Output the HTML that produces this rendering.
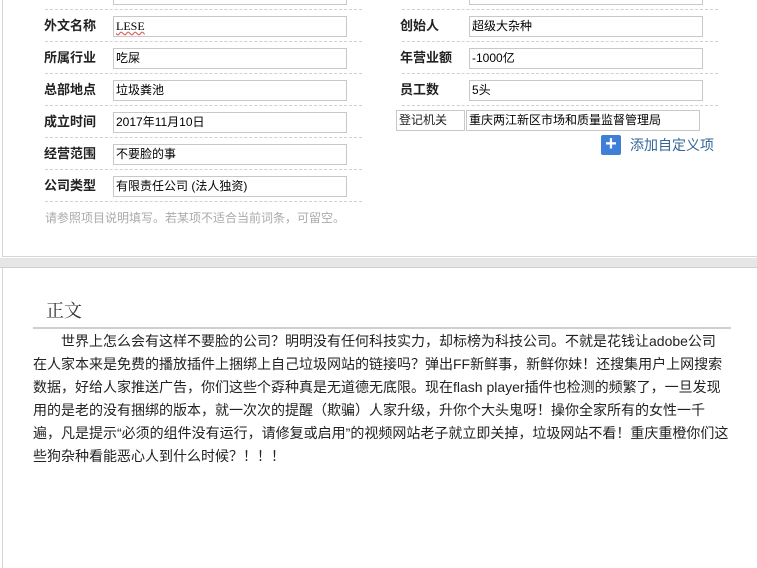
<!DOCTYPE html>
<html><head><meta charset="utf-8"><style>
*{margin:0;padding:0;box-sizing:border-box}
body{width:757px;height:563px;overflow:hidden;background:#fff;font-family:"Liberation Sans","Noto Sans CJK SC",sans-serif;position:relative;color:#333}
.abs{position:absolute}
.p1{left:2px;top:-2px;width:770px;height:259px;border:1px solid #d6d6d6;background:#fff}
.band{left:0;top:258px;width:757px;height:10px;background:#e6e6e6;border-bottom:1px solid #d0d0d0}
.p2{left:2px;top:268px;width:770px;height:300px;border-left:1px solid #d6d6d6;background:#fff}
.dash{height:0;border-top:1px dashed #d0d0d0}
.lbl{font-size:13px;font-weight:bold;color:#222;line-height:20px}
.inp{height:21px;border:1px solid #c8c8c8;font-size:12px;line-height:19px;padding-left:2px;color:#000;background:#fff}
.hint{font-size:12px;color:#aaa}
.body{left:33px;top:330px;width:686px;font-size:14px;line-height:23px;color:#222}
.body div{white-space:nowrap}
</style></head><body>
<div class="abs p1"></div>
<div class="abs band"></div>
<div class="abs p2"></div>

<div class="abs inp" style="left:113px;top:-16px;width:234px"></div>
<div class="abs inp" style="left:469px;top:-16px;width:234px"></div>

<div class="abs dash" style="left:45px;top:9px;width:317px"></div>
<div class="abs dash" style="left:45px;top:41px;width:317px"></div>
<div class="abs dash" style="left:45px;top:73px;width:317px"></div>
<div class="abs dash" style="left:45px;top:105px;width:317px"></div>
<div class="abs dash" style="left:45px;top:137px;width:317px"></div>
<div class="abs dash" style="left:45px;top:169px;width:317px"></div>
<div class="abs dash" style="left:45px;top:201px;width:317px"></div>

<div class="abs lbl" style="left:44px;top:16px">外文名称</div>
<div class="abs inp" style="left:113px;top:16px;width:234px;font-family:'Liberation Serif',serif;text-decoration:underline wavy #d66">LESE</div>
<div class="abs lbl" style="left:44px;top:48px">所属行业</div>
<div class="abs inp" style="left:113px;top:48px;width:234px">吃屎</div>
<div class="abs lbl" style="left:44px;top:80px">总部地点</div>
<div class="abs inp" style="left:113px;top:80px;width:234px">垃圾粪池</div>
<div class="abs lbl" style="left:44px;top:112px">成立时间</div>
<div class="abs inp" style="left:113px;top:112px;width:234px">2017年11月10日</div>
<div class="abs lbl" style="left:44px;top:144px">经营范围</div>
<div class="abs inp" style="left:113px;top:144px;width:234px">不要脸的事</div>
<div class="abs lbl" style="left:44px;top:176px">公司类型</div>
<div class="abs inp" style="left:113px;top:176px;width:234px">有限责任公司 (法人独资)</div>
<div class="abs hint" style="left:45px;top:209px">请参照项目说明填写。若某项不适合当前词条，可留空。</div>

<div class="abs dash" style="left:402px;top:9px;width:316px"></div>
<div class="abs dash" style="left:402px;top:41px;width:316px"></div>
<div class="abs dash" style="left:402px;top:73px;width:316px"></div>
<div class="abs dash" style="left:402px;top:105px;width:316px"></div>
<div class="abs lbl" style="left:400px;top:16px">创始人</div>
<div class="abs inp" style="left:469px;top:16px;width:234px">超级大杂种</div>
<div class="abs lbl" style="left:400px;top:48px">年营业额</div>
<div class="abs inp" style="left:469px;top:48px;width:234px">-1000亿</div>
<div class="abs lbl" style="left:400px;top:80px">员工数</div>
<div class="abs inp" style="left:469px;top:80px;width:234px">5头</div>
<div class="abs inp" style="left:396px;top:110px;width:69px;font-size:12px;color:#222">登记机关</div>
<div class="abs inp" style="left:466px;top:110px;width:234px">重庆两江新区市场和质量监督管理局</div>
<div class="abs" style="left:601px;top:135px;width:20px;height:20px;background:#3f7fd8;border-radius:2px;color:#fff;font-size:20px;line-height:19px;text-align:center;font-weight:bold">+</div>
<div class="abs" style="left:630px;top:136px;font-size:14px;color:#336699;line-height:18px">添加自定义项</div>

<div class="abs" style="left:46px;top:297px;font-size:18px;color:#333;font-family:'Liberation Serif','Noto Serif CJK SC',serif">正文</div>
<div class="abs" style="left:33px;top:327px;width:698px;height:2px;background:#cfcfcf"></div>
<div class="abs body">
<div style="padding-left:28px">世界上怎么会有这样不要脸的公司？明明没有任何科技实力，却标榜为科技公司。不就是花钱让adobe公司</div>
<div>在人家本来是免费的播放插件上捆绑上自己垃圾网站的链接吗？弹出FF新鲜事，新鲜你妹！还搜集用户上网搜索</div>
<div>数据，好给人家推送广告，你们这些个孬种真是无道德无底限。现在flash player插件也检测的频繁了，一旦发现</div>
<div>用的是老的没有捆绑的版本，就一次次的提醒（欺骗）人家升级，升你个大头鬼呀！操你全家所有的女性一千</div>
<div>遍，凡是提示“必须的组件没有运行，请修复或启用”的视频网站老子就立即关掉，垃圾网站不看！重庆重橙你们这</div>
<div>些狗杂种看能恶心人到什么时候？！！！</div>
</div>
</body></html>
